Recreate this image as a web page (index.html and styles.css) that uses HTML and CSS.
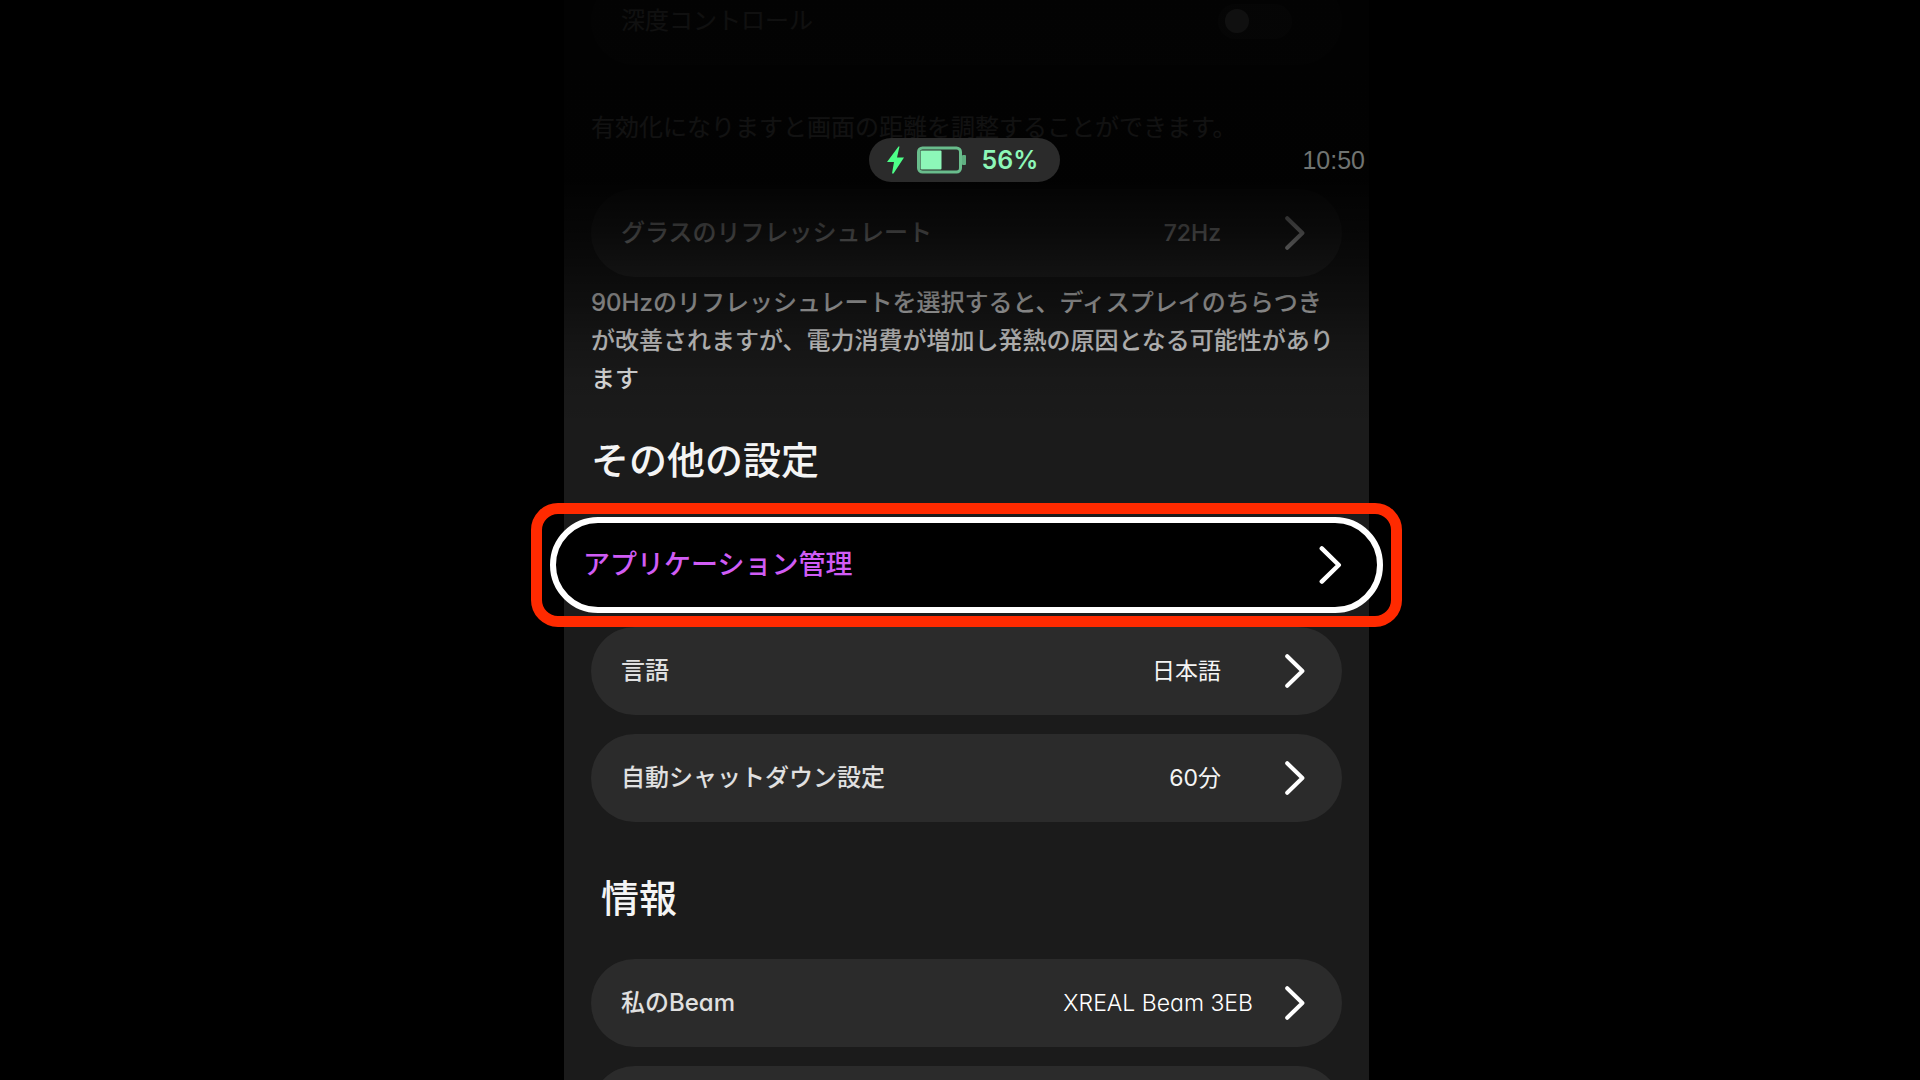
FILE: index.html
```html
<!DOCTYPE html>
<html lang="ja">
<head>
  <meta charset="UTF-8">
  <title>設定</title>
  <meta name="viewport" content="width=device-width, initial-scale=1.0">
  <link rel="stylesheet" href="styles.css">
</head>
<body>
  <svg width="0" height="0" class="sprite">
    <symbol id="chevron" viewBox="0 0 20 34">
      <path d="M2.2 2.2 L17.4 17 L2.2 31.8" fill="none" stroke="currentColor" stroke-width="4" stroke-linecap="round" stroke-linejoin="round"/>
    </symbol>
  </svg>

  <main class="panel">
    <div class="content">
      <label class="row">
        <span class="label regular">深度コントロール</span>
        <input type="checkbox" class="toggle">
      </label>
      <p class="note spaced">有効化になりますと画面の距離を調整することができます。</p>

      <button class="row">
        <span class="label">グラスのリフレッシュレート</span>
        <span class="value strong">72Hz</span>
        <svg class="chevron"><use href="#chevron"/></svg>
      </button>
      <p class="note">90Hzのリフレッシュレートを選択すると、ディスプレイのちらつきが改善されますが、電力消費が増加し発熱の原因となる可能性があります</p>

      <h2 class="title">その他の設定</h2>
      <div class="rows">
        <button class="row focused">
          <span class="label">アプリケーション管理</span>
          <svg class="chevron"><use href="#chevron"/></svg>
        </button>
        <button class="row">
          <span class="label">言語</span>
          <span class="value">日本語</span>
          <svg class="chevron"><use href="#chevron"/></svg>
        </button>
        <button class="row">
          <span class="label">自動シャットダウン設定</span>
          <span class="value">60分</span>
          <svg class="chevron"><use href="#chevron"/></svg>
        </button>
      </div>

      <h2 class="title info">情報</h2>
      <div class="rows">
        <button class="row">
          <span class="label">私のBeam</span>
          <span class="value wide">XREAL Beam 3EB</span>
          <svg class="chevron"><use href="#chevron"/></svg>
        </button>
        <button class="row"></button>
      </div>
    </div>

    <div class="fade"></div>

    <header class="status">
      <div class="battery">
        <svg width="17" height="28" viewBox="0 0 17 28">
          <path d="M11.5 0.5 L0 16 H7 L5 27.5 H6.5 L17 11.5 H10 L12.5 0.5 Z" fill="#4dff88"/>
        </svg>
        <svg class="cell" width="49" height="28" viewBox="0 0 49 28">
          <rect x="1.5" y="2" width="42" height="24" rx="4" fill="none" stroke="#69bd8c" stroke-width="3"/>
          <rect x="3.500" y="4.500" width="21" height="19" rx="1" fill="#8df7b8"/>
          <rect x="45" y="9" width="4" height="10" rx="1" fill="#5fae80"/>
        </svg>
        <span>56%</span>
      </div>
      <time class="clock">10:50</time>
    </header>
  </main>
</body>
</html>
```
FILE: styles.css
```css
* {
  box-sizing: border-box;
}

html, body {
  margin: 0;
  height: 100%;
  overflow: hidden;
  background: #000;
}

body {
  padding-left: 13px;
  font-family: Inter, "Noto Sans CJK JP", sans-serif;
  font-feature-settings: "cv11";
  font-size: 24px;
  line-height: 38px;
  color: #e0e0e0;
}

.sprite {
  position: absolute;
}

.panel {
  position: relative;
  display: flow-root;
  max-width: 805px;
  height: 100%;
  margin: 0 auto;
  padding: 0 27px;
  overflow: clip;
  overflow-clip-margin: 40px;
  background: #1b1b1b;
}

/* list is scrolled a little past its first row */
.content {
  margin-top: -23px;
}

.row {
  display: flex;
  align-items: center;
  width: 100%;
  height: 88px;
  padding: 0 37px 0 30px;
  border: none;
  border-radius: 44px;
  background: #2b2b2b;
  color: inherit;
  font: inherit;
  font-feature-settings: inherit;
  text-align: left;
  cursor: pointer;
}

.rows {
  display: flex;
  flex-direction: column;
  gap: 19px;
}

.label {
  flex: 1;
  font-weight: 500;
}

.regular {
  font-weight: 400;
}

.value {
  margin-right: 64px;
  font-size: 23px;
  font-weight: 400;
  color: #f4f4f4;
}

.strong {
  font-weight: 500;
  color: inherit;
}

.wide {
  margin-right: 32px;
  font-weight: 300;
  color: #fff;
}

.chevron {
  width: 20px;
  height: 34px;
  color: #fff;
}

.toggle {
  appearance: none;
  display: flex;
  align-items: center;
  width: 74px;
  height: 35px;
  margin: 0 13px 0 0;
  padding: 0 7px;
  border-radius: 18px;
  background: #4a4a4a;
}

.toggle::before {
  content: "";
  width: 24px;
  height: 24px;
  border-radius: 50%;
  background: #ddd;
}

.note {
  margin: 7px 0 0;
  font-weight: 500;
}

.spaced {
  margin: 44px 0 42px;
  font-weight: 400;
}

.title {
  margin: 34px 0 33px;
  font-size: 38px;
  font-weight: 500;
  line-height: 56px;
  color: #f4f4f4;
}

.info {
  margin-top: 48px;
  padding-left: 10px;
}

.focused {
  position: relative;
  width: auto;
  height: 96px;
  margin: -4px -41px -5px;
  padding: 0 35px 0 27px;
  border: 6px solid #fff;
  border-radius: 48px;
  background: #000;
  color: #d05cf5;
  font-size: 27px;
}

.focused .chevron {
  width: 23px;
  height: 38px;
}

/* highlight frame around the selected row */
.focused::after {
  content: "";
  position: absolute;
  inset: -20px -25px;
  border: 11px solid #ff2a00;
  border-radius: 27px;
}

.fade {
  position: absolute;
  top: 0;
  left: 0;
  right: 0;
  height: 430px;
  background: linear-gradient(
    rgba(0, 0, 0, 0.93) 0,
    rgba(0, 0, 0, 0.92) 130px,
    rgba(0, 0, 0, 0.92) 180px,
    rgba(0, 0, 0, 0.76) 233px,
    rgba(0, 0, 0, 0.6) 270px,
    rgba(0, 0, 0, 0.45) 303px,
    rgba(0, 0, 0, 0.25) 340px,
    rgba(0, 0, 0, 0.08) 380px,
    rgba(0, 0, 0, 0) 430px
  );
  pointer-events: none;
}

.status {
  position: absolute;
  top: 138px;
  left: 0;
  right: 4px;
  display: grid;
  grid-template-columns: 1fr auto 1fr;
  align-items: center;
}

.battery {
  grid-column: 2;
  display: flex;
  align-items: center;
  height: 44px;
  padding: 0 22px 0 18px;
  border-radius: 22px;
  background: #2b2b2b;
  color: #8df7b8;
  font-size: 25px;
  font-weight: 600;
}

.cell {
  margin: 0 16px 0 13px;
}

.clock {
  justify-self: end;
  font-family: "Liberation Sans", sans-serif;
  font-size: 25px;
  color: #707472;
}
```
